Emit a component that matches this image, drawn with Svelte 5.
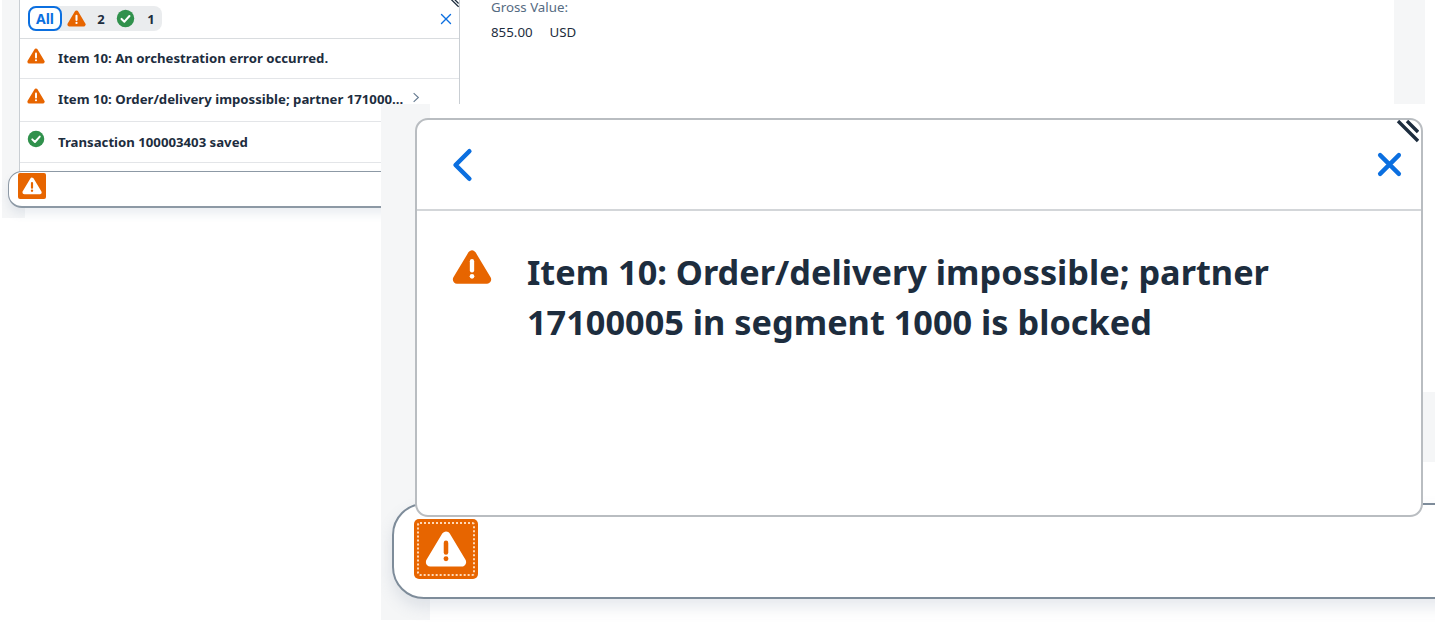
<script>
  const rows = [
    { kind: 'warn', text: 'Item 10: An orchestration error occurred.' },
    { kind: 'warn', text: 'Item 10: Order/delivery impossible; partner 17100005 in segment 1000 is blocked', more: true },
    { kind: 'ok', text: 'Transaction 100003403 saved' }
  ];
</script>

{#snippet warn(cls)}
  <svg class={cls} viewBox="0 0 24 24">
    <path class="tri" d="M12 4.5 L21 19.5 H3 Z" />
    <path class="mark" d="M12 8.5 V14" />
    <circle class="dot" cx="12" cy="17.6" r="1.4" />
  </svg>
{/snippet}

{#snippet ok(cls)}
  <svg class={cls} viewBox="0 0 24 24">
    <circle class="okdisc" cx="12" cy="12" r="11" />
    <path class="okmark" d="M7 12.5 L10.6 16 L17 8.8" />
  </svg>
{/snippet}

{#snippet cross(cls)}
  <svg class={cls} viewBox="0 0 24 24"><path d="M3 3 L21 21 M21 3 L3 21" /></svg>
{/snippet}

{#snippet grip(cls)}
  <svg class={cls} viewBox="0 0 24 24"><path d="M3 1 L23 21 M12 1 L23 12" /></svg>
{/snippet}

<main class="stage">
  <!-- back screenshot, top left -->
  <section class="shot-back">
    <div class="strip-left"></div>
    <div class="panel-small">
      <header class="tabs-row">
        <div class="tabs">
          <span class="tab-all">All</span>
          {@render warn('ico-tab')}
          <span class="count">2</span>
          {@render ok('ico-tab')}
          <span class="count">1</span>
        </div>
        {@render cross('close-small')}
      </header>
      {#each rows as row}
        <div class="row">
          {#if row.kind === 'warn'}
            {@render warn('ico-row')}
          {:else}
            {@render ok('ico-row')}
          {/if}
          <span class="row-text">{row.text}</span>
          {#if row.more}
            <svg class="chev" viewBox="0 0 10 14"><path d="M2 1.5 L8 7 L2 12.5" /></svg>
          {/if}
        </div>
      {/each}
      {@render grip('grip-small')}
    </div>
    <div class="foot-small">
      <span class="btn-small">{@render warn('ico-btn')}</span>
    </div>
    <div class="gross">
      <div class="gross-label">Gross Value:</div>
      <div class="gross-value"><span>855.00</span><span>USD</span></div>
    </div>
    <div class="strip-right"></div>
  </section>

  <!-- front screenshot, the enlarged popover -->
  <section class="shot-front">
    <div class="strip-front"></div>
    <div class="strip-side"></div>
    <div class="foot-large">
      <span class="btn-large">
        <span class="btn-dots">{@render warn('ico-btn-large')}</span>
      </span>
    </div>
    <div class="panel-large">
      <header class="detail-head">
        <svg class="back" viewBox="0 0 24 36"><path d="M20 3 L5 18 L20 33" /></svg>
        {@render cross('close-large')}
      </header>
      <div class="detail-body">
        {@render warn('ico-detail')}
        <p>Item 10: Order/delivery impossible; partner 17100005 in segment 1000 is blocked</p>
      </div>
      {@render grip('grip-large')}
    </div>
  </section>
</main>

<style>
  :global(body) {
    margin: 0;
    background: #fff;
  }

  .stage {
    position: relative;
    width: 1435px;
    height: 623px;
    overflow: hidden;
    background: #fff;
    font-family: "Noto Sans", "Open Sans", sans-serif;
    color: #1d2d3e;
  }

  svg {
    display: block;
    flex-shrink: 0;
  }

  .tri {
    fill: #e76500;
    stroke: #e76500;
    stroke-width: 5;
    stroke-linejoin: round;
  }

  .mark {
    fill: none;
    stroke: #fff;
    stroke-width: 2.6;
    stroke-linecap: round;
  }

  .dot {
    fill: #fff;
  }

  .okdisc {
    fill: #30914c;
  }

  .okmark {
    fill: none;
    stroke: #fff;
    stroke-width: 2.6;
    stroke-linecap: round;
    stroke-linejoin: round;
  }

  /* back screenshot */
  .shot-back {
    position: absolute;
    left: 0;
    top: 0;
    width: 1435px;
    height: 218px;
  }

  .strip-left {
    position: absolute;
    left: 2px;
    top: 0;
    width: 23px;
    height: 218px;
    background: #f5f6f7;
  }

  .panel-small {
    position: absolute;
    left: 19px;
    top: -1px;
    width: 441px;
    height: 173px;
    box-sizing: border-box;
    background: #fff;
    border: solid #c9ced3;
    border-width: 0 1px 1px 1px;
  }

  .tabs-row {
    display: flex;
    align-items: center;
    justify-content: space-between;
    height: 40px;
    box-sizing: border-box;
    padding: 0 7px 0 8px;
    border-bottom: 1px solid #d9dcdf;
  }

  .tabs {
    display: flex;
    align-items: center;
    width: 134px;
    height: 25px;
    box-sizing: border-box;
    background: #eaecee;
    border-radius: 8px;
  }

  .tabs > * {
    flex-shrink: 0;
  }

  .tab-all {
    width: 34px;
    height: 25px;
    box-sizing: border-box;
    line-height: 22px;
    text-align: center;
    font-size: 14px;
    font-weight: 700;
    color: #0b6fe0;
    background: #fff;
    border: 2px solid #0b6fe0;
    border-radius: 8px;
    margin-right: 5px;
  }

  .ico-tab {
    width: 19px;
    height: 19px;
  }

  .count {
    width: 8px;
    margin: 0 11px;
    text-align: center;
    font-size: 13px;
    font-weight: 700;
  }

  .count:last-child {
    margin-left: 12px;
  }

  .close-small {
    width: 12px;
    height: 12px;
    fill: none;
    stroke: #0b6fe0;
    stroke-width: 2.8;
    stroke-linecap: round;
  }

  .row {
    display: flex;
    align-items: flex-start;
    box-sizing: border-box;
    padding: 8px 39px 0 7px;
    border-bottom: 1px solid #e3e5e8;
  }

  .row:nth-of-type(1) {
    height: 40px;
  }

  .row:nth-of-type(2) {
    height: 43px;
  }

  .row:nth-of-type(3) {
    height: 41px;
  }

  .ico-row {
    width: 18px;
    height: 18px;
    margin-right: 13px;
  }

  .row-text {
    flex: 1;
    min-width: 0;
    padding-top: 2px;
    font-size: 13.2px;
    line-height: 18px;
    font-weight: 700;
    white-space: nowrap;
    overflow: hidden;
    text-overflow: ellipsis;
  }

  .row:nth-of-type(2) .row-text {
    padding-top: 3px;
  }

  .row:nth-of-type(3) .row-text {
    padding-top: 3px;
  }

  .chev {
    width: 8px;
    height: 11px;
    margin: 5px 0 0 5px;
    fill: none;
    stroke: #64798f;
    stroke-width: 1.4;
  }

  .grip-small {
    position: absolute;
    right: 0;
    top: 0;
    width: 9px;
    height: 9px;
    fill: none;
    stroke: #1d2d3e;
    stroke-width: 3.4;
  }

  .foot-small {
    position: absolute;
    left: 8px;
    top: 171px;
    width: 440px;
    height: 37px;
    box-sizing: border-box;
    padding: 1px 0 0 9px;
    background: #fff;
    border: 1px solid #8d99a5;
    border-bottom-width: 2px;
    border-radius: 14px 0 0 14px;
    box-shadow: 0 6px 10px rgba(91, 115, 145, 0.12);
  }

  .btn-small {
    display: flex;
    align-items: center;
    justify-content: center;
    width: 28px;
    height: 26px;
    background: #e76500;
    border-radius: 2px;
  }

  .btn-small :global(.tri),
  .btn-large :global(.tri) {
    fill: #fff;
    stroke: #fff;
  }

  .btn-small :global(.mark),
  .btn-large :global(.mark) {
    stroke: #e76500;
  }

  .btn-small :global(.dot),
  .btn-large :global(.dot) {
    fill: #e76500;
  }

  .ico-btn {
    width: 20px;
    height: 20px;
  }

  .gross {
    position: absolute;
    left: 491px;
    top: 0;
    font-size: 13.3px;
    line-height: 14px;
  }

  .gross-label {
    color: #556b82;
  }

  .gross-value {
    display: flex;
    gap: 17px;
    margin-top: 11px;
  }

  .strip-right {
    position: absolute;
    left: 1394px;
    top: 0;
    width: 31px;
    height: 104px;
    background: #f5f6f7;
  }

  /* front screenshot */
  .shot-front {
    position: absolute;
    left: 381px;
    top: 104px;
    width: 1054px;
    height: 519px;
    overflow: hidden;
    background: #fff;
  }

  .strip-front {
    position: absolute;
    left: 0;
    top: 0;
    width: 49px;
    height: 516px;
    background: #f5f6f7;
  }

  .strip-side {
    position: absolute;
    left: 1042px;
    top: 288px;
    width: 12px;
    height: 70px;
    background: #f5f6f7;
  }

  .foot-large {
    position: absolute;
    left: 11px;
    top: 399px;
    width: 1100px;
    height: 96px;
    box-sizing: border-box;
    padding: 14px 0 0 20px;
    background: #fff;
    border: 2px solid #7e8c9a;
    border-radius: 32px 0 0 32px;
    box-shadow: 0 8px 16px rgba(91, 115, 145, 0.16);
  }

  .btn-large {
    display: block;
    width: 64px;
    height: 60px;
    box-sizing: border-box;
    padding: 3px;
    background: #e76500;
    border-radius: 5px;
  }

  .btn-dots {
    display: flex;
    align-items: center;
    justify-content: center;
    height: 100%;
    box-sizing: border-box;
    border: 2px dotted #ffd9b8;
    border-radius: 3px;
  }

  .ico-btn-large {
    width: 42px;
    height: 42px;
  }

  .panel-large {
    position: absolute;
    left: 34px;
    top: 14px;
    width: 1008px;
    height: 399px;
    box-sizing: border-box;
    background: #fff;
    border: 2px solid #b9bdc1;
    border-radius: 13px;
    overflow: hidden;
  }

  .detail-head {
    display: flex;
    align-items: center;
    justify-content: space-between;
    height: 91px;
    box-sizing: border-box;
    padding: 0 19px 0 34px;
    border-bottom: 2px solid #d3d6d9;
  }

  .back {
    width: 22px;
    height: 34px;
    fill: none;
    stroke: #0b6fe0;
    stroke-width: 5;
    stroke-linecap: round;
    stroke-linejoin: round;
  }

  .close-large {
    width: 25px;
    height: 25px;
    fill: none;
    stroke: #0b6fe0;
    stroke-width: 4.2;
    stroke-linecap: round;
  }

  .detail-body {
    display: flex;
    align-items: flex-start;
    padding: 36px 60px 0 35px;
  }

  .ico-detail {
    width: 40px;
    height: 40px;
    margin-right: 35px;
  }

  .detail-body p {
    margin: 0;
    width: 800px;
    font-size: 34.3px;
    line-height: 50px;
    font-weight: 700;
    color: #1d2d3e;
  }

  .grip-large {
    position: absolute;
    right: 2px;
    top: 0;
    width: 24px;
    height: 24px;
    fill: none;
    stroke: #1d2d3e;
    stroke-width: 3.4;
  }
</style>
